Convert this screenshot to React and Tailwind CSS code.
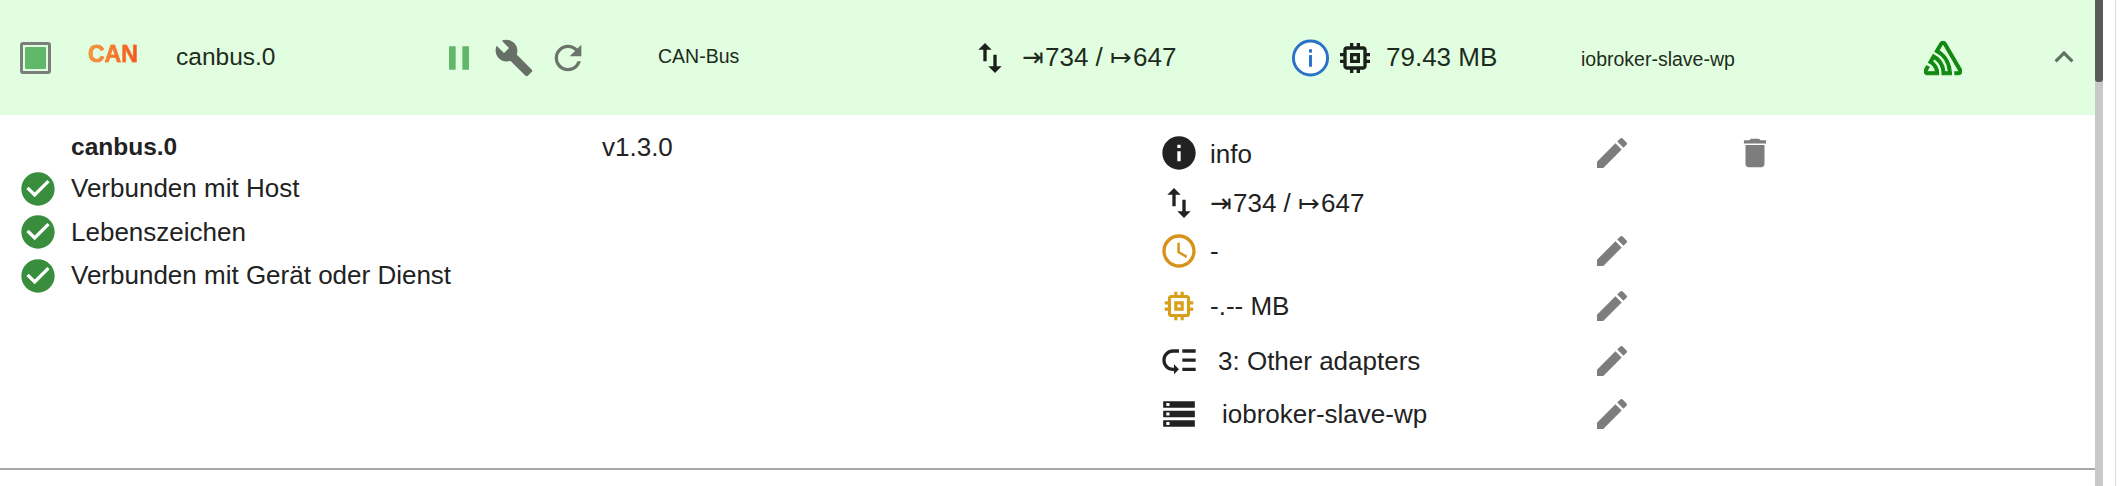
import React from 'react';
import {
  MdPause, MdBuild, MdRefresh, MdImportExport, MdMemory, MdExpandLess, MdCheckCircle,
  MdInfo, MdEdit, MdDelete, MdAccessTime, MdLowPriority, MdStorage,
} from 'react-icons/md';
import { SiSentry } from 'react-icons/si';

const font = 'font-["Liberation_Sans",Arial,sans-serif]';

const BlueInfo = () => (
  <svg viewBox="0 0 40 40" className="w-[39px] h-[40px]">
    <circle cx="20" cy="20" r="17.5" fill="#fff" stroke="#2a72c8" strokeWidth="3" />
    <rect x="18.5" y="11" width="3" height="3.5" fill="#2a72c8" />
    <rect x="18.5" y="17" width="3" height="12" fill="#2a72c8" />
  </svg>
);

const Counter = () => (
  <span className="whitespace-nowrap">
    <span className="inline-block w-[23px] text-[26px]">⇥</span>734 / <span className="inline-block w-[23px] text-[26px]">↦</span>647
  </span>
);

const StatusRow = ({ text }) => (
  <div className="flex items-center h-[43.5px]">
    <MdCheckCircle className="text-[#388e3c] text-[40px] ml-[18px] shrink-0" />
    <span className="ml-[13px]">{text}</span>
  </div>
);

const DetailRow = ({ icon, className, children, textClass = 'ml-[14px]', edit = true, trash = false }) => (
  <div className={`flex items-center h-[40px] ${className}`}>
    <div className="flex items-center w-[430px] shrink-0 whitespace-nowrap">
      <div className="w-[34px] flex justify-center shrink-0">{icon}</div>
      <div className={textClass}>{children}</div>
    </div>
    <div className="w-[40px]">
      {edit && <MdEdit className="text-[#7d7d7d] text-[40px]" />}
    </div>
    {trash && <MdDelete className="text-[#7d7d7d] text-[38px] ml-[104px]" />}
  </div>
);

export default function App() {
  return (
    <div className={`flex h-[486px] w-[2126px] overflow-hidden bg-white text-[#222] ${font}`}>
      <div className="w-[2095px] shrink-0">
        <header className="flex items-center h-[115px] bg-[#e1ffe0] text-[#1f2b20]">
          <div className="w-[88px] pl-[20px]">
            <div className="w-[31px] h-[32px] border-[3px] border-[#7a7f7a] rounded-[3px] p-[2px]">
              <div className="w-full h-full bg-[#62b86a] rounded-[1px]" />
            </div>
          </div>
          <div className="w-[88px] -mt-[4px]">
            <span className="text-[23px] leading-none font-bold bg-gradient-to-r from-[#f59a3c] to-[#f4511e] bg-clip-text text-transparent [-webkit-text-stroke:0.5px_#f4803a]">CAN</span>
          </div>
          <div className="w-[263px] text-[24.5px]">canbus.0</div>
          <div className="flex items-center w-[219px] text-[#6b756b]">
            <MdPause className="text-[#62b86a] text-[40px]" />
            <MdBuild className="text-[#667066] text-[40px] ml-[15px]" />
            <MdRefresh className="text-[40px] ml-[14px]" />
          </div>
          <div className="w-[312px] text-[19.5px] -mt-[2px]">CAN-Bus</div>
          <div className="flex items-center w-[321px] text-[26px]">
            <MdImportExport className="text-[40px] text-[#1a1f1a] mr-[12px]" />
            <Counter />
          </div>
          <div className="flex items-center w-[290px] text-[26px]">
            <BlueInfo />
            <MdMemory className="text-[40px] text-[#1a1f1a] ml-[5px]" />
            <span className="ml-[11px]">79.43 MB</span>
          </div>
          <div className="w-[343px] text-[19.5px] mt-[4px]">iobroker-slave-wp</div>
          <div className="w-[121px]"><SiSentry className="text-[#128a12] text-[38px]" stroke="currentColor" strokeWidth="0.7" /></div>
          <MdExpandLess className="text-[#647064] text-[38px] -mt-[2px]" />
        </header>

        <div className="flex h-[355px] border-b-2 border-[#a8a8a8] text-[26px]">
          <div className="w-[602px] pt-[16px]">
            <div className="pl-[71px] h-[36px] font-bold leading-[32px] text-[24.5px]">canbus.0</div>
            <StatusRow text="Verbunden mit Host" />
            <StatusRow text="Lebenszeichen" />
            <StatusRow text="Verbunden mit Gerät oder Dienst" />
          </div>
          <div className="w-[560px] pt-[16px] leading-[32px]">v1.3.0</div>
          <div className="pt-[18px]">
            <DetailRow trash icon={<MdInfo className="text-[#222] text-[40px] shrink-0" />}><span className="relative top-[1px]">info</span></DetailRow>
            <DetailRow className="mt-[10px]" edit={false} icon={<MdImportExport className="text-[#222] text-[40px] shrink-0" />}><Counter /></DetailRow>
            <DetailRow className="mt-[8px]" icon={<MdAccessTime className="text-[#d8921a] text-[40px] shrink-0" />}>-</DetailRow>
            <DetailRow className="mt-[15px]" icon={<MdMemory className="text-[#d8a01a] text-[38px] shrink-0" />}>-.-- MB</DetailRow>
            <DetailRow className="mt-[15px]" textClass="ml-[22px]" icon={<MdLowPriority className="text-[#222] text-[40px] shrink-0" />}>3: Other adapters</DetailRow>
            <DetailRow className="mt-[13px]" textClass="ml-[26px]" icon={<MdStorage className="text-[#222] text-[38px] shrink-0" />}>iobroker-slave-wp</DetailRow>
          </div>
        </div>
      </div>
      <div className="w-[8px] shrink-0 bg-[#c8c8c8]">
        <div className="h-[82px] bg-[#5a5a5a] rounded-b-[3px]" />
      </div>
      <div className="w-[13px] shrink-0 border-r border-[#dcdcdc]" />
    </div>
  );
}
